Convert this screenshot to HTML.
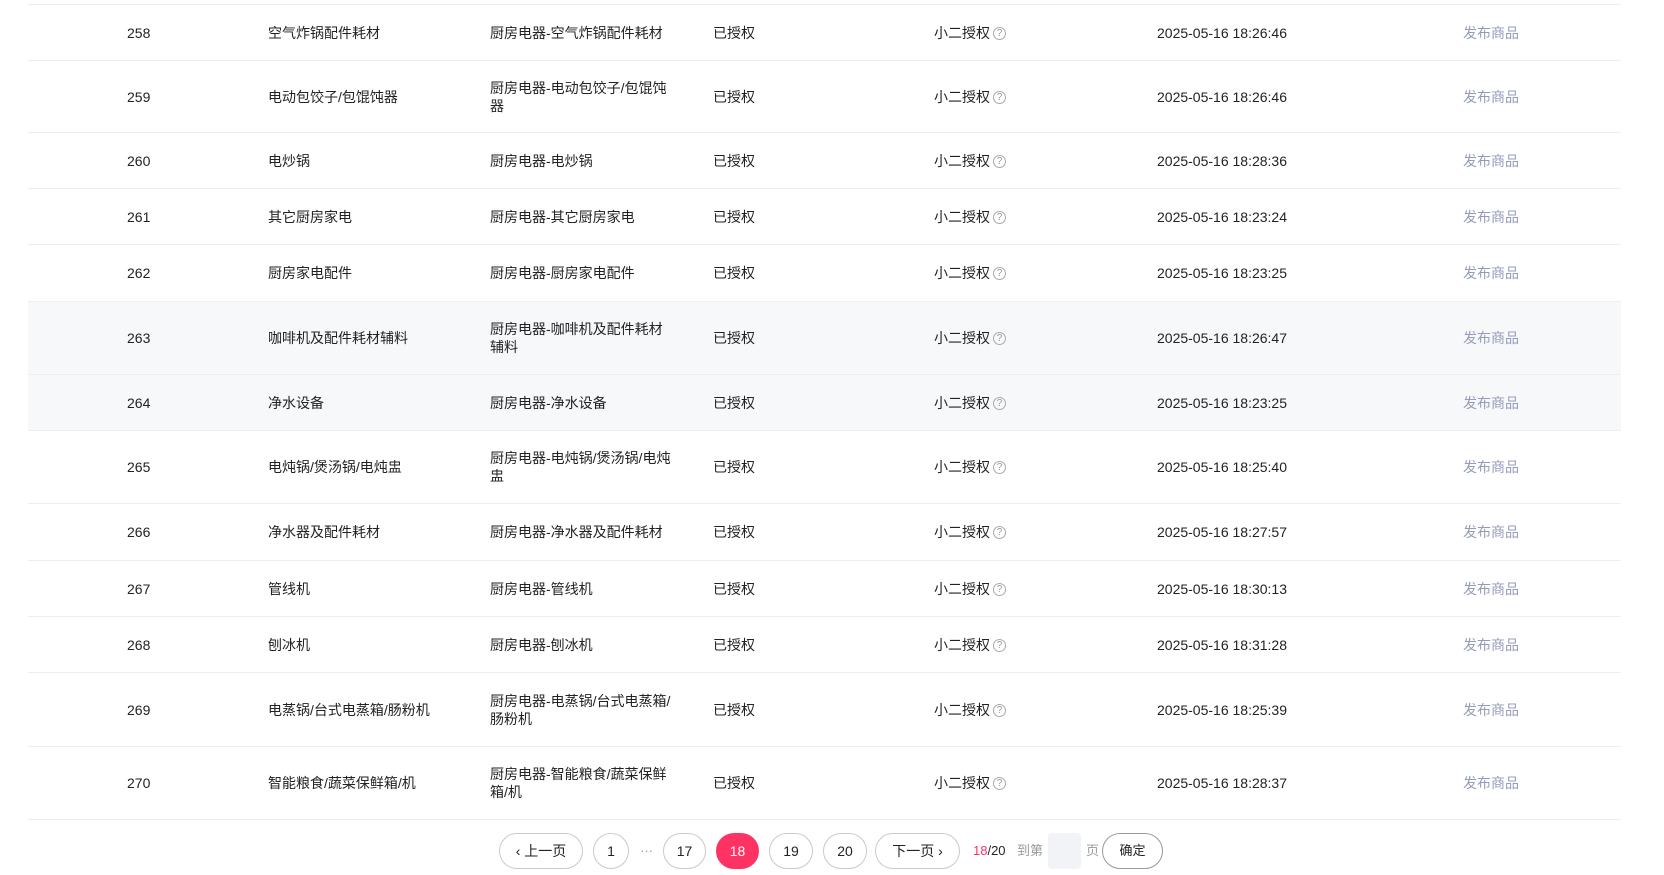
<!DOCTYPE html>
<html><head><meta charset="utf-8"><style>
*{margin:0;padding:0;box-sizing:border-box}
body{width:1664px;height:875px;background:#fff;font-family:"Liberation Sans","Noto Sans CJK SC",sans-serif;font-size:14px;color:#222;position:relative;overflow:hidden}
.row{position:absolute;left:28px;width:1593px;border-bottom:1px solid #eceef2}
.row.g{background:#f7f8fa}
.c{position:absolute;top:50%;transform:translateY(-50%);line-height:18px}
.id{left:99px}.nm{left:240px}.pt{left:462px;width:185px}.st{left:685px}.xe{left:906px}.dt{left:1129px}.ln{left:1435px;color:#959cbb}
.q{display:inline-block;width:13px;height:13px;border:1px solid #aaa;border-radius:50%;font-size:10px;line-height:11px;text-align:center;color:#999;vertical-align:2px;margin-left:3px}
.pg{position:absolute;top:833px;height:36px;border:1px solid #c8cad0;border-radius:18px;text-align:center;line-height:34px;font-size:14px;color:#222;background:#fff}
.pg.a{background:#ff3363;border-color:#ff3363;color:#fff}
.t{position:absolute;top:833px;line-height:36px;font-size:13px;color:#999}
</style></head><body>
<div class="row" style="top:0;height:5px"></div>
<div class="row" style="top:5px;height:56px"><span class="c id">258</span><span class="c nm">空气炸锅配件耗材</span><span class="c pt">厨房电器-空气炸锅配件耗材</span><span class="c st">已授权</span><span class="c xe">小二授权<span class="q">?</span></span><span class="c dt">2025-05-16 18:26:46</span><span class="c ln">发布商品</span></div>
<div class="row" style="top:61px;height:72px"><span class="c id">259</span><span class="c nm">电动包饺子/包馄饨器</span><span class="c pt">厨房电器-电动包饺子/包馄饨器</span><span class="c st">已授权</span><span class="c xe">小二授权<span class="q">?</span></span><span class="c dt">2025-05-16 18:26:46</span><span class="c ln">发布商品</span></div>
<div class="row" style="top:133px;height:56px"><span class="c id">260</span><span class="c nm">电炒锅</span><span class="c pt">厨房电器-电炒锅</span><span class="c st">已授权</span><span class="c xe">小二授权<span class="q">?</span></span><span class="c dt">2025-05-16 18:28:36</span><span class="c ln">发布商品</span></div>
<div class="row" style="top:189px;height:56px"><span class="c id">261</span><span class="c nm">其它厨房家电</span><span class="c pt">厨房电器-其它厨房家电</span><span class="c st">已授权</span><span class="c xe">小二授权<span class="q">?</span></span><span class="c dt">2025-05-16 18:23:24</span><span class="c ln">发布商品</span></div>
<div class="row" style="top:245px;height:57px"><span class="c id">262</span><span class="c nm">厨房家电配件</span><span class="c pt">厨房电器-厨房家电配件</span><span class="c st">已授权</span><span class="c xe">小二授权<span class="q">?</span></span><span class="c dt">2025-05-16 18:23:25</span><span class="c ln">发布商品</span></div>
<div class="row g" style="top:302px;height:73px"><span class="c id">263</span><span class="c nm">咖啡机及配件耗材辅料</span><span class="c pt">厨房电器-咖啡机及配件耗材辅料</span><span class="c st">已授权</span><span class="c xe">小二授权<span class="q">?</span></span><span class="c dt">2025-05-16 18:26:47</span><span class="c ln">发布商品</span></div>
<div class="row g" style="top:375px;height:56px"><span class="c id">264</span><span class="c nm">净水设备</span><span class="c pt">厨房电器-净水设备</span><span class="c st">已授权</span><span class="c xe">小二授权<span class="q">?</span></span><span class="c dt">2025-05-16 18:23:25</span><span class="c ln">发布商品</span></div>
<div class="row" style="top:431px;height:73px"><span class="c id">265</span><span class="c nm">电炖锅/煲汤锅/电炖盅</span><span class="c pt">厨房电器-电炖锅/煲汤锅/电炖盅</span><span class="c st">已授权</span><span class="c xe">小二授权<span class="q">?</span></span><span class="c dt">2025-05-16 18:25:40</span><span class="c ln">发布商品</span></div>
<div class="row" style="top:504px;height:57px"><span class="c id">266</span><span class="c nm">净水器及配件耗材</span><span class="c pt">厨房电器-净水器及配件耗材</span><span class="c st">已授权</span><span class="c xe">小二授权<span class="q">?</span></span><span class="c dt">2025-05-16 18:27:57</span><span class="c ln">发布商品</span></div>
<div class="row" style="top:561px;height:56px"><span class="c id">267</span><span class="c nm">管线机</span><span class="c pt">厨房电器-管线机</span><span class="c st">已授权</span><span class="c xe">小二授权<span class="q">?</span></span><span class="c dt">2025-05-16 18:30:13</span><span class="c ln">发布商品</span></div>
<div class="row" style="top:617px;height:56px"><span class="c id">268</span><span class="c nm">刨冰机</span><span class="c pt">厨房电器-刨冰机</span><span class="c st">已授权</span><span class="c xe">小二授权<span class="q">?</span></span><span class="c dt">2025-05-16 18:31:28</span><span class="c ln">发布商品</span></div>
<div class="row" style="top:673px;height:74px"><span class="c id">269</span><span class="c nm">电蒸锅/台式电蒸箱/肠粉机</span><span class="c pt">厨房电器-电蒸锅/台式电蒸箱/肠粉机</span><span class="c st">已授权</span><span class="c xe">小二授权<span class="q">?</span></span><span class="c dt">2025-05-16 18:25:39</span><span class="c ln">发布商品</span></div>
<div class="row" style="top:747px;height:73px"><span class="c id">270</span><span class="c nm">智能粮食/蔬菜保鲜箱/机</span><span class="c pt">厨房电器-智能粮食/蔬菜保鲜箱/机</span><span class="c st">已授权</span><span class="c xe">小二授权<span class="q">?</span></span><span class="c dt">2025-05-16 18:28:37</span><span class="c ln">发布商品</span></div>

<div class="pg" style="left:499px;width:84px">‹ 上一页</div>
<div class="pg" style="left:593px;width:36px">1</div>
<div class="t" style="left:640px;color:#999">···</div>
<div class="pg" style="left:663px;width:43px">17</div>
<div class="pg a" style="left:716px;width:43px">18</div>
<div class="pg" style="left:769px;width:44px">19</div>
<div class="pg" style="left:823px;width:44px">20</div>
<div class="pg" style="left:875px;width:85px">下一页 ›</div>
<div class="t" style="left:973px;color:#222"><span style="color:#ff3363">18</span>/20</div>
<div class="t" style="left:1017px">到第</div>
<div style="position:absolute;left:1048px;top:833px;width:33px;height:36px;background:#f2f3f6;border-radius:4px"></div>
<div class="t" style="left:1086px">页</div>
<div class="pg" style="left:1102px;width:61px;border-color:#999;font-size:13px">确定</div>
</body></html>
